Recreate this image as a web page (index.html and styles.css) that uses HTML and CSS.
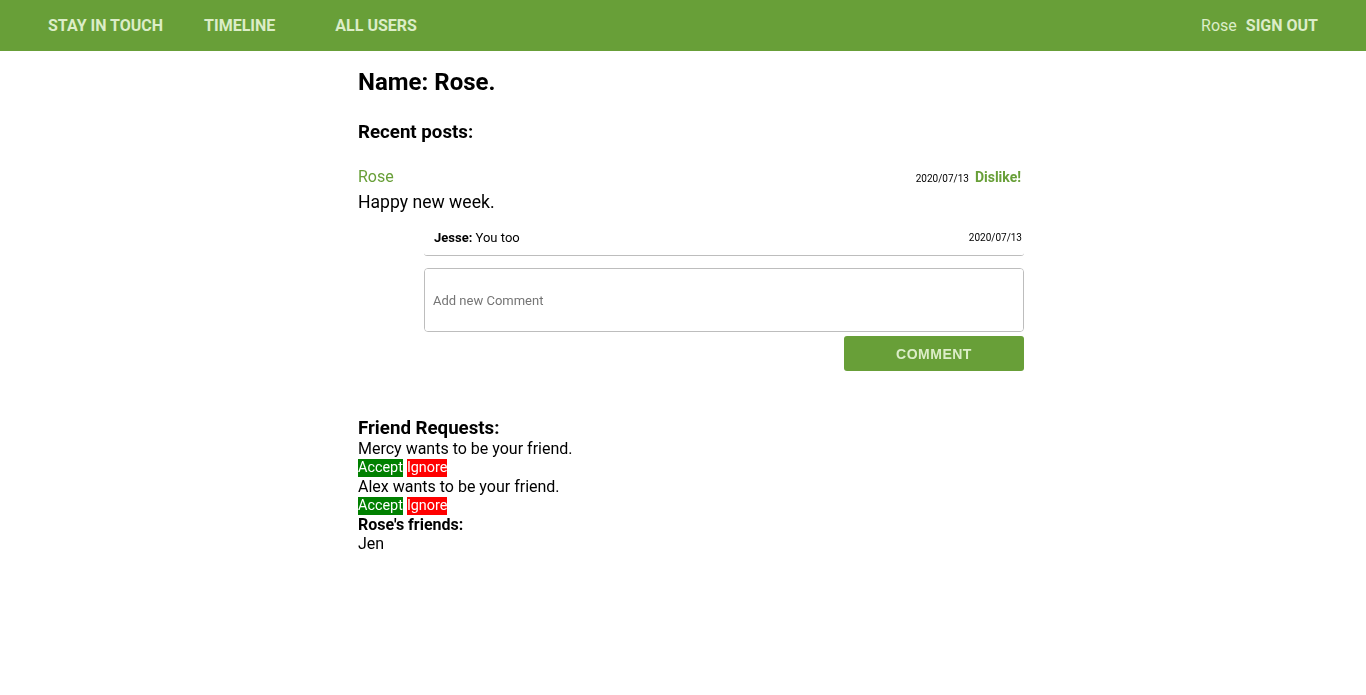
FILE: index.html
```html
<!DOCTYPE html>
<html>
<head>
<meta charset="utf-8">
<link rel="stylesheet" href="styles.css">
</head>
<body>
<nav class="nav">
  <div class="nav-left">
    <a class="nav-link l1">STAY IN TOUCH</a>
    <a class="nav-link l2">TIMELINE</a>
    <a class="nav-link l3">ALL USERS</a>
  </div>
  <div class="nav-right">
    <span class="nav-user">Rose</span>
    <a class="nav-link">SIGN OUT</a>
  </div>
</nav>
<main class="main">
  <h2 class="name">Name: Rose.</h2>
  <h3 class="recent">Recent posts:</h3>
  <div class="post">
    <div class="post-head">
      <span class="post-author">Rose</span>
      <span class="post-meta"><span class="date">2020/07/13</span><a class="dislike">Dislike!</a></span>
    </div>
    <div class="post-body">Happy new week.</div>
    <div class="comments">
      <div class="comment">
        <span><b>Jesse:</b> You too</span>
        <span class="date">2020/07/13</span>
      </div>
      <textarea class="new-comment" placeholder="Add new Comment"></textarea>
      <div class="btn-row"><button class="btn">COMMENT</button></div>
    </div>
  </div>
  <section class="friends">
    <h3 class="fr-title">Friend Requests:</h3>
    <div class="line">Mercy wants to be your friend.</div>
    <div class="actions"><span class="accept">Accept</span><span class="ignore">Ignore</span></div>
    <div class="line">Alex wants to be your friend.</div>
    <div class="actions"><span class="accept">Accept</span><span class="ignore">Ignore</span></div>
    <div class="fr-sub">Rose's friends:</div>
    <div class="line">Jen</div>
  </section>
</main>
</body>
</html>
```
FILE: styles.css
```css
* { box-sizing: border-box; }
body {
  margin: 0;
  font-family: Roboto, "Liberation Sans", sans-serif;
  color: #000;
  background: #fff;
}
.nav {
  height: 51px;
  background: #689f38;
  display: flex;
  align-items: center;
  justify-content: space-between;
  padding: 0 48px;
}
.nav-left, .nav-right { display: flex; align-items: center; }
.nav-link {
  color: #dcedc8;
  font-weight: 700;
  font-size: 16px;
  text-decoration: none;
}
.l2 { margin-left: 41px; }
.l3 { margin-left: 60px; }
.nav-user { color: #dcedc8; font-size: 16px; margin-right: 9px; }
.main {
  width: 666px;
  margin: 0 auto;
  position: relative;
  left: 8px;
}
.name { font-size: 24px; font-weight: 700; margin: 17px 0 0; line-height: 28px; }
.recent { font-size: 18.7px; font-weight: 700; margin: 25px 0 0; line-height: 22px; }
.post { margin-top: 23px; }
.post-head { display: flex; justify-content: space-between; align-items: center; height: 20px; }
.post-author { color: #689f38; font-size: 16px; }
.post-meta { display: flex; align-items: baseline; padding-right: 3px; margin-top: 2px; }
.date { font-size: 10px; }
.dislike { color: #689f38; font-weight: 700; font-size: 14px; margin-left: 6px; }
.post-body { font-size: 17.6px; line-height: 22px; margin-top: 5px; }
.comments { margin-left: 66px; margin-top: 10px; }
.comment {
  display: flex;
  justify-content: space-between;
  align-items: center;
  font-size: 13px;
  height: 33px;
  padding: 0 2px 3px 10px;
  border-bottom: 1px solid #bdbdbd;
  border-radius: 0 0 3px 3px;
}
.new-comment {
  display: block;
  width: 100%;
  height: 64px;
  margin-top: 12px;
  border: 1px solid #bdbdbd;
  border-radius: 4px;
  padding: 24px 8px;
  font-family: Roboto, "Liberation Sans", sans-serif;
  font-size: 13px;
  resize: none;
}
.new-comment::placeholder { color: #757575; }
.btn-row { display: flex; justify-content: flex-end; margin-top: 4px; }
.btn {
  width: 180px;
  height: 35px;
  background: #689f38;
  color: #dcedc8;
  border: none;
  border-radius: 3px;
  font-family: "Liberation Sans", Arial, sans-serif;
  font-weight: 700;
  font-size: 14px;
  letter-spacing: 0.5px;
}
.friends { margin-top: 47px; font-size: 16px; }
.fr-title { font-size: 18.7px; font-weight: 700; margin: 0; line-height: 21px; }
.line { line-height: 19px; }
.actions { font-size: 14.4px; line-height: 17px; margin: 1px 0 0; display: flex; gap: 4px; align-items: center; }
.accept, .ignore { padding: 0 0 1px; }
.accept { background: #008000; color: #fff; }
.ignore { background: #ff0000; color: #fff; }
.fr-sub { font-weight: 700; line-height: 19px; }
```
